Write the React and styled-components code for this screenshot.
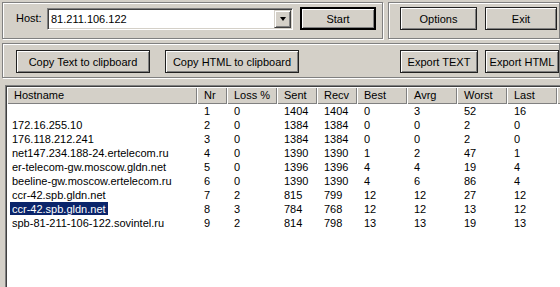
import React from 'react';
import styled, {createGlobalStyle, css} from 'styled-components';

const GlobalStyle = createGlobalStyle`
    body {
        margin: 0;
        background: #d4d0c8;
        font-family: "Liberation Sans", Arial, sans-serif;
        font-size: 11px;
        color: #000;
    }
`;

const Window = styled.div`
    width: 560px;
    height: 287px;
    overflow: hidden;
    box-sizing: border-box;
    padding: 2px 0 0 2px;
    display: flex;
    flex-direction: column;
`;

const Row = styled.div`
    display: flex;
    gap: 5px;
`;

// etched frame: grey line with a white one right behind it
const Panel = styled.div`
    box-sizing: border-box;
    width: ${p => p.w}px;
    height: ${p => p.h}px;
    border: 1px solid #808080;
    box-shadow: inset 1px 1px #fff, 1px 1px #fff;
    display: flex;
    align-items: flex-start;
    padding: ${p => p.pad};
    margin-top: ${p => p.mt || 0}px;
`;

const Label = styled.span`
    width: 31px;
    line-height: 22px;
`;

const Combo = styled.div`
    box-sizing: border-box;
    width: 246px;
    height: 22px;
    margin-top: 1px;
    display: flex;
    background: #fff;
    border-style: solid;
    border-width: 1px;
    border-color: #808080 #fff #fff #808080;
    box-shadow: inset 1px 1px #404040, inset -1px -1px #d4d0c8;
    padding: 1px;
`;

const ComboText = styled.div`
    flex: 1;
    padding-left: 2px;
    line-height: 18px;
`;

const ComboButton = styled.div`
    box-sizing: border-box;
    width: 17px;
    height: 18px;
    background: #d4d0c8;
    border-style: solid;
    border-width: 1px;
    border-color: #d4d0c8 #404040 #404040 #d4d0c8;
    box-shadow: inset 1px 1px #fff, inset -1px -1px #808080;
    display: flex;
    align-items: center;
    justify-content: center;
`;

const Arrow = styled.div`
    width: 0;
    height: 0;
    border-left: 3.5px solid transparent;
    border-right: 3.5px solid transparent;
    border-top: 4px solid #000;
`;

const Button = styled.button`
    box-sizing: border-box;
    width: ${p => p.w}px;
    height: 23px;
    margin-left: ${p => p.ml || 0}px;
    padding: 0;
    background: #d4d0c8;
    font: inherit;
    color: #000;
    border: 1px solid #202020;
    box-shadow: inset 1px 1px #fff, inset -1px -1px #808080;
    ${p => p.primary && css`
        border: 2px solid #000;
    `}
`;

const List = styled.div`
    margin: 7px 0 0 3px;
    flex: 1;
    background: #fff;
    border-style: solid;
    border-width: 1px 0 0 1px;
    border-color: #808080;
    box-shadow: inset 1px 1px #404040;
    padding: 1px 0 0 1px;
    overflow: hidden;
`;

const Header = styled.div`
    display: flex;
    height: 17px;
    white-space: nowrap;
`;

const HeadCell = styled.div`
    box-sizing: border-box;
    flex: 0 0 ${p => p.w}px;
    padding-left: 7px;
    line-height: 17px;
    background: #d4d0c8;
    box-shadow: inset 1px 1px #fff, inset -1px -1px #808080;
`;

const Filler = styled(HeadCell)`
    flex: 1 0 20px;
`;

const DataRow = styled.div`
    display: flex;
    height: 14px;
    line-height: 14px;
    white-space: nowrap;
`;

const Cell = styled.div`
    box-sizing: border-box;
    flex: 0 0 ${p => p.w}px;
    padding-left: ${p => p.first ? 3 : 7}px;
`;

const Host = styled.span`
    display: inline-block;
    padding: 0 2px;
    height: 13px;
    line-height: 14px;
    ${p => p.selected && css`
        background: #0a246a;
        color: #fff;
    `}
`;

const columns = [
    {label: 'Hostname', w: 190},
    {label: 'Nr', w: 30},
    {label: 'Loss %', w: 50},
    {label: 'Sent', w: 40},
    {label: 'Recv', w: 40},
    {label: 'Best', w: 50},
    {label: 'Avrg', w: 50},
    {label: 'Worst', w: 50},
    {label: 'Last', w: 50},
];

const hops = [
    ['', 1, 0, 1404, 1404, 0, 3, 52, 16],
    ['172.16.255.10', 2, 0, 1384, 1384, 0, 0, 2, 0],
    ['176.118.212.241', 3, 0, 1384, 1384, 0, 0, 2, 0],
    ['net147.234.188-24.ertelecom.ru', 4, 0, 1390, 1390, 1, 2, 47, 1],
    ['er-telecom-gw.moscow.gldn.net', 5, 0, 1396, 1396, 4, 4, 19, 4],
    ['beeline-gw.moscow.ertelecom.ru', 6, 0, 1390, 1390, 4, 6, 86, 4],
    ['ccr-42.spb.gldn.net', 7, 2, 815, 799, 12, 12, 27, 12],
    ['ccr-42.spb.gldn.net', 8, 3, 784, 768, 12, 12, 13, 12],
    ['spb-81-211-106-122.sovintel.ru', 9, 2, 814, 798, 13, 13, 19, 13],
];

const selectedRow = 7;

export default function App() {
    return (
        <Window>
            <GlobalStyle />
            <Row>
                <Panel w={381} h={37} pad="4px 0 0 13px">
                    <Label>Host:</Label>
                    <Combo>
                        <ComboText>81.211.106.122</ComboText>
                        <ComboButton><Arrow /></ComboButton>
                    </Combo>
                    <Button primary w={76} ml={7}>Start</Button>
                </Panel>
                <Panel w={172} h={37} pad="4px 0 0 11px">
                    <Button w={77}>Options</Button>
                    <Button w={72} ml={8}>Exit</Button>
                </Panel>
            </Row>
            <Panel w={558} h={35} mt={4} pad="6px 0 0 13px">
                <Button w={134}>Copy Text to clipboard</Button>
                <Button w={134} ml={15}>Copy HTML to clipboard</Button>
                <Button w={78} ml={101}>Export TEXT</Button>
                <Button w={74} ml={7}>Export HTML</Button>
            </Panel>
            <List>
                <Header>
                    {columns.map(c => <HeadCell key={c.label} w={c.w}>{c.label}</HeadCell>)}
                    <Filler />
                </Header>
                {hops.map((h, i) => (
                    <DataRow key={i}>
                        {h.map((v, j) => (
                            <Cell key={j} w={columns[j].w} first={j === 0}>
                                {j === 0
                                    ? <Host selected={i === selectedRow}>{v}</Host>
                                    : v}
                            </Cell>
                        ))}
                    </DataRow>
                ))}
            </List>
        </Window>
    );
}
